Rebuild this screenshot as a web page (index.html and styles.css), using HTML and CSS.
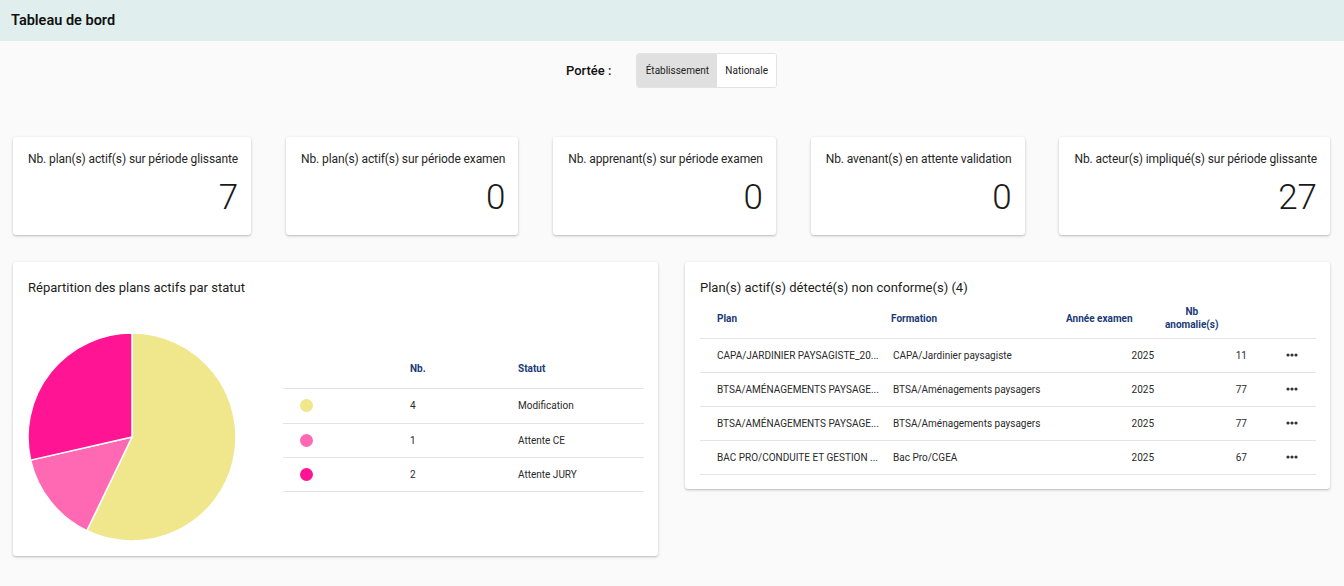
FILE: index.html
```html
<!DOCTYPE html>
<html lang="fr">
<head>
<meta charset="utf-8">
<title>Tableau de bord</title>
<link rel="stylesheet" href="styles.css">
</head>
<body>
<header class="topbar"><h1 class="topbar-title">Tableau de bord</h1></header>
<main class="page">
  <div class="scope">
    <span class="scope-label">Portée :</span>
    <div class="toggle">
      <button class="toggle-btn is-active">Établissement</button>
      <button class="toggle-btn">Nationale</button>
    </div>
  </div>

  <section class="kpis">
    <div class="card kpi"><div class="kpi-title">Nb. plan(s) actif(s) sur période glissante</div><div class="kpi-value">7</div></div>
    <div class="card kpi"><div class="kpi-title">Nb. plan(s) actif(s) sur période examen</div><div class="kpi-value">0</div></div>
    <div class="card kpi"><div class="kpi-title">Nb. apprenant(s) sur période examen</div><div class="kpi-value">0</div></div>
    <div class="card kpi"><div class="kpi-title">Nb. avenant(s) en attente validation</div><div class="kpi-value">0</div></div>
    <div class="card kpi"><div class="kpi-title">Nb. acteur(s) impliqué(s) sur période glissante</div><div class="kpi-value">27</div></div>
  </section>

  <section class="panels">
    <div class="card panel">
      <h2 class="panel-title">Répartition des plans actifs par statut</h2>
      <div class="chart-body">
        <svg class="pie" width="210" height="210" viewBox="-105 -105 210 210">
          <path d="M0 0 L0 -104 A104 104 0 1 1 -45.12 93.70 Z" fill="#f0e68c" stroke="#fff" stroke-width="1.5"/>
          <path d="M0 0 L-45.12 93.70 A104 104 0 0 1 -101.39 23.14 Z" fill="#ff69b4" stroke="#fff" stroke-width="1.5"/>
          <path d="M0 0 L-101.39 23.14 A104 104 0 0 1 0 -104 Z" fill="#ff1493" stroke="#fff" stroke-width="1.5"/>
        </svg>
        <table class="legend">
          <thead><tr><th class="c-dot"></th><th class="c-nb">Nb.</th><th>Statut</th></tr></thead>
          <tbody>
            <tr><td class="c-dot"><span class="dot dot-yellow"></span></td><td class="c-nb">4</td><td>Modification</td></tr>
            <tr><td class="c-dot"><span class="dot dot-pink"></span></td><td class="c-nb">1</td><td>Attente CE</td></tr>
            <tr><td class="c-dot"><span class="dot dot-deep"></span></td><td class="c-nb">2</td><td>Attente JURY</td></tr>
          </tbody>
        </table>
      </div>
    </div>

    <div class="card panel panel-table">
      <h2 class="panel-title">Plan(s) actif(s) détecté(s) non conforme(s) (4)</h2>
      <table class="plans">
        <colgroup><col class="w-plan"><col class="w-form"><col class="w-year"><col class="w-nb"><col class="w-act"></colgroup>
        <thead>
          <tr><th class="h-plan">Plan</th><th class="h-form">Formation</th><th class="h-year">Année examen</th><th class="h-nb"><span class="nb-head">Nb<br>anomalie(s)</span></th><th></th></tr>
        </thead>
        <tbody>
          <tr><td class="d-plan">CAPA/JARDINIER PAYSAGISTE_20...</td><td class="d-form">CAPA/Jardinier paysagiste</td><td class="d-year">2025</td><td class="d-nb">11</td><td class="d-act"><svg width="12" height="4" viewBox="0 0 12 4"><circle cx="2" cy="2" r="1.6"/><circle cx="6" cy="2" r="1.6"/><circle cx="10" cy="2" r="1.6"/></svg></td></tr>
          <tr><td class="d-plan">BTSA/AMÉNAGEMENTS PAYSAGE...</td><td class="d-form">BTSA/Aménagements paysagers</td><td class="d-year">2025</td><td class="d-nb">77</td><td class="d-act"><svg width="12" height="4" viewBox="0 0 12 4"><circle cx="2" cy="2" r="1.6"/><circle cx="6" cy="2" r="1.6"/><circle cx="10" cy="2" r="1.6"/></svg></td></tr>
          <tr><td class="d-plan">BTSA/AMÉNAGEMENTS PAYSAGE...</td><td class="d-form">BTSA/Aménagements paysagers</td><td class="d-year">2025</td><td class="d-nb">77</td><td class="d-act"><svg width="12" height="4" viewBox="0 0 12 4"><circle cx="2" cy="2" r="1.6"/><circle cx="6" cy="2" r="1.6"/><circle cx="10" cy="2" r="1.6"/></svg></td></tr>
          <tr><td class="d-plan">BAC PRO/CONDUITE ET GESTION ...</td><td class="d-form">Bac Pro/CGEA</td><td class="d-year">2025</td><td class="d-nb">67</td><td class="d-act"><svg width="12" height="4" viewBox="0 0 12 4"><circle cx="2" cy="2" r="1.6"/><circle cx="6" cy="2" r="1.6"/><circle cx="10" cy="2" r="1.6"/></svg></td></tr>
        </tbody>
      </table>
    </div>
  </section>
</main>
</body>
</html>
```

FILE: styles.css
```css
* { box-sizing: border-box; }
html, body { margin: 0; padding: 0; }
body {
  background: #fafafa;
  font-family: Roboto, "Liberation Sans", Arial, sans-serif;
  color: #212121;
  width: 1344px;
  height: 586px;
  overflow: hidden;
}

.topbar {
  height: 41px;
  background: #e0efee;
  display: flex;
  align-items: center;
  padding-left: 11px;
}
.topbar-title {
  margin: 0;
  font-size: 14.5px;
  font-weight: 600;
  color: #111;
}

.page { padding: 0 14px 0 13px; }

.scope {
  display: flex;
  align-items: center;
  justify-content: center;
  padding-top: 12px;
  gap: 25px;
}
.scope-label {
  font-size: 13px;
  font-weight: 500;
  color: #111;
}
.toggle {
  display: flex;
  border: 1px solid #e3e3e3;
  border-radius: 3px;
  overflow: hidden;
  height: 35px;
}
.toggle-btn {
  border: none;
  background: #fff;
  font-family: inherit;
  font-size: 10px;
  color: #222;
  padding: 0 8px;
  height: 100%;
}
.toggle-btn.is-active { background: #e0e0e0; width: 80px; }

.kpis {
  display: flex;
  justify-content: space-between;
  margin-top: 49px;
}
.card {
  background: #fff;
  border-radius: 3px;
  box-shadow: 0 1px 3px rgba(0,0,0,0.22), 0 1px 1px rgba(0,0,0,0.06);
}
.kpi {
  height: 98px;
  padding: 14px 13px 0 15px;
}
.kpi-title {
  font-size: 12px;
  line-height: 16px;
  letter-spacing: -0.1px;
  color: #262626;
  white-space: nowrap;
}
.kpi-value {
  margin-top: 11px;
  font-size: 35px;
  line-height: 40px;
  font-weight: 300;
  text-align: right;
  color: #1a1a1a;
}

.panels {
  display: grid;
  grid-template-columns: 645px 645px;
  gap: 27px;
  margin-top: 27px;
  align-items: start;
}
.panel { padding: 16px 14px 14px 15px; }
.panel-table { padding-bottom: 14px; }
.panel-title {
  margin: 0;
  font-size: 13px;
  font-weight: 400;
  line-height: 20px;
  color: #1c1c1c;
}

.chart-body {
  display: flex;
  align-items: flex-start;
  margin-top: 34px;
}
.pie { display: block; margin-left: -1px; flex: none; }

.legend {
  margin-left: 46px;
  margin-top: 16px;
  width: 361px;
  border-collapse: collapse;
  font-size: 10px;
}
.legend th {
  height: 40px;
  text-align: left;
  font-weight: 700;
  color: #1b3a78;
  padding: 2px 0 0 16px;
  border-bottom: 1px solid #e4e4e4;
}
.legend td {
  height: 34px;
  padding: 0 0 0 16px;
  color: #2a2a2a;
  border-bottom: 1px solid #e4e4e4;
}
.legend tbody tr:first-child td { height: 35px; }
.legend .c-dot { width: 111px; }
.legend .c-nb { width: 108px; }
.dot {
  display: block;
  width: 13px;
  height: 13px;
  border-radius: 50%;
  margin-left: 1px;
}
.dot-yellow { background: #f0e68c; }
.dot-pink { background: #ff69b4; }
.dot-deep { background: #ff1493; }

.plans {
  width: 616px;
  table-layout: fixed;
  border-collapse: collapse;
  font-size: 10px;
  margin-top: 1px;
}
.w-plan { width: 182px; }
.w-form { width: 168px; }
.w-year { width: 110px; }
.w-nb { width: 95px; }
.w-act { width: 61px; }
.plans th {
  height: 39px;
  text-align: left;
  font-weight: 700;
  color: #1b3a78;
  border-bottom: 1px solid #e4e4e4;
  padding: 0;
  line-height: 13px;
}
.plans .h-plan { padding-left: 17px; }
.plans .h-form { padding-left: 9px; }
.plans .h-year { padding-left: 16px; }
.plans .h-nb { padding-left: 5px; }
.nb-head { display: inline-block; text-align: center; }
.plans td {
  height: 34px;
  padding: 0;
  color: #2a2a2a;
  border-bottom: 1px solid #e4e4e4;
  white-space: nowrap;
}
.plans .d-plan { padding: 0 0 0 17px; }
.plans .d-form { padding-left: 11px; }
.plans .d-year { text-align: right; padding-right: 6px; }
.plans .d-nb { text-align: right; padding-right: 8px; }
.plans .d-act { padding-left: 31px; line-height: 0; }
.plans .d-act svg { fill: #333; }
```
